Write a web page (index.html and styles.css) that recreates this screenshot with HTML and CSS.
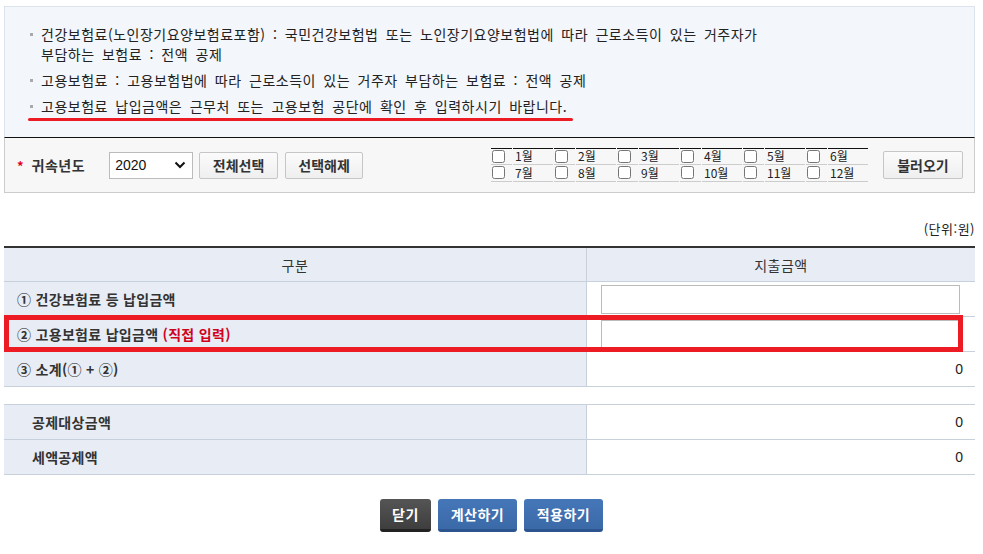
FILE: index.html
```html
<!DOCTYPE html>
<html lang="ko">
<head>
<meta charset="utf-8">
<title>건강보험료 등</title>
<link rel="stylesheet" href="styles.css">
</head>
<body>
<div class="page">
  <div class="info">
    <ul class="info-list">
      <li>건강보험료(노인장기요양보험료포함) : 국민건강보험법 또는 노인장기요양보험법에 따라 근로소득이 있는 거주자가<br>부담하는 보험료 : 전액 공제</li>
      <li>고용보험료 : 고용보험법에 따라 근로소득이 있는 거주자 부담하는 보험료 : 전액 공제</li>
      <li><span class="marked">고용보험료 납입금액은 근무처 또는 고용보험 공단에 확인 후 입력하시기 바랍니다.</span></li>
    </ul>
  </div>

  <div class="filter">
    <div class="filter-left">
      <span class="req">*</span>
      <span class="filter-label">귀속년도</span>
      <div class="select"><span>2020</span>
        <svg width="12" height="8" viewBox="0 0 12 8"><path d="M1.5 1.5 L6 6 L10.5 1.5" fill="none" stroke="#111" stroke-width="2"/></svg>
      </div>
      <button class="btn-gray w79">전체선택</button>
      <button class="btn-gray w78">선택해제</button>
    </div>
    <div class="filter-right">
      <div class="months">
        <div class="cb"><input type="checkbox"></div><div class="ml">1월</div>
        <div class="cb"><input type="checkbox"></div><div class="ml">2월</div>
        <div class="cb"><input type="checkbox"></div><div class="ml">3월</div>
        <div class="cb"><input type="checkbox"></div><div class="ml">4월</div>
        <div class="cb"><input type="checkbox"></div><div class="ml">5월</div>
        <div class="cb"><input type="checkbox"></div><div class="ml">6월</div>
        <div class="cb r2"><input type="checkbox"></div><div class="ml r2">7월</div>
        <div class="cb r2"><input type="checkbox"></div><div class="ml r2">8월</div>
        <div class="cb r2"><input type="checkbox"></div><div class="ml r2">9월</div>
        <div class="cb r2"><input type="checkbox"></div><div class="ml r2">10월</div>
        <div class="cb r2"><input type="checkbox"></div><div class="ml r2">11월</div>
        <div class="cb r2"><input type="checkbox"></div><div class="ml r2">12월</div>
      </div>
      <button class="btn-gray btn-load">불러오기</button>
    </div>
  </div>

  <div class="unit">(단위:원)</div>

  <div class="grid main">
    <div class="row head">
      <div class="c-left">구분</div>
      <div class="c-right">지출금액</div>
    </div>
    <div class="row">
      <div class="c-left label"><span>① 건강보험료 등 납입금액</span></div>
      <div class="c-right"><input class="amount" type="text"></div>
    </div>
    <div class="row highlighted">
      <div class="c-left label"><span>② 고용보험료 납입금액 <em>(직접 입력)</em></span></div>
      <div class="c-right"><input class="amount" type="text"></div>
    </div>
    <div class="row">
      <div class="c-left label"><span>③ 소계(① + ②)</span></div>
      <div class="c-right num">0</div>
    </div>
  </div>

  <div class="grid sub">
    <div class="row">
      <div class="c-left label indent">공제대상금액</div>
      <div class="c-right num">0</div>
    </div>
    <div class="row">
      <div class="c-left label indent">세액공제액</div>
      <div class="c-right num">0</div>
    </div>
  </div>

  <div class="actions">
    <button class="btn-dark">닫기</button>
    <button class="btn-blue">계산하기</button>
    <button class="btn-blue">적용하기</button>
  </div>
</div>
</body>
</html>
```

FILE: styles.css
```css
* { box-sizing: border-box; }
html, body { margin: 0; padding: 0; background: #fff; }
body {
  font-family: "Noto Sans CJK KR", "Noto Sans", sans-serif;
  color: #333;
  font-size: 14px;
}
.page { padding: 6px 8px 0 4px; width: 983px; }

/* info box */
.info {
  background: #f3f6fb;
  border: 1px solid #dde3ec;
  border-bottom: none;
  height: 131px;
  padding: 17px 0 0 20px;
}
.info-list { list-style: none; margin: 0; padding: 0; }
.info-list li {
  position: relative;
  padding-left: 16px;
  line-height: 20px;
  margin-bottom: 6px;
  font-size: 14px;
  letter-spacing: 0.5px;
  word-spacing: 3px;
  color: #222;
}
.info-list li::before {
  content: "";
  position: absolute;
  left: 5px; top: 9px;
  width: 3px; height: 3px;
  background: #aaa;
}
.marked { position: relative; display: inline-block; }
.marked::after {
  content: "";
  position: absolute;
  left: -13px; right: -6px;
  bottom: -5px;
  height: 3px;
  border-radius: 2px;
  background: #ed1c24;
}

/* filter bar */
.filter {
  border-top: 1px solid #111;
  border-left: 1px solid #ccc;
  border-right: 1px solid #ccc;
  border-bottom: 1px solid #ccc;
  background: #f7f7f7;
  height: 56px;
  display: flex;
  align-items: center;
  justify-content: space-between;
  padding: 0 11px 0 12px;
}
.filter-left { display: flex; align-items: center; }
.req { color: #e2001a; font-weight: bold; font-size: 13px; margin-right: 8px; }
.filter-label { font-weight: bold; font-size: 14px; color: #333; margin-right: 24px; letter-spacing: 0.5px; }
.select {
  width: 84px; height: 27px;
  border: 1px solid #bbb;
  background: #fff;
  display: flex; align-items: center; justify-content: space-between;
  padding: 0 6px 0 5px;
  font-family: "Liberation Sans", Arial, sans-serif;
  font-size: 14px; color: #111;
  margin-right: 6px;
}
.btn-gray {
  height: 27px;
  border: 1px solid #c6c6c6;
  border-radius: 2px;
  background: linear-gradient(#fbfbfb, #efefef);
  font-family: "Noto Sans CJK KR", sans-serif;
  font-weight: bold;
  font-size: 14px;
  color: #333;
  padding: 0;
  margin-right: 7px;
  line-height: 1;
}
.w79 { width: 79px; }
.w78 { width: 78px; }
.filter-right { display: flex; align-items: center; }
.months {
  display: grid;
  grid-template-columns: repeat(6, 21px 40px);
  column-gap: 1px;
  margin-top: -1px;
}
.months > div {
  border-top: 1px solid #111;
  border-bottom: 1px solid #ccc;
  height: 17px;
  display: flex; align-items: center;
}
.months > div.r2 { border-top: none; height: 17px; }
.cb input {
  margin: 0 0 0 1px;
  width: 13px; height: 13px;
}
.ml { font-size: 12px; color: #222; padding-left: 2px; line-height: 14px; font-family: "Noto Sans CJK KR", sans-serif; }
.btn-load { margin: 0 0 0 15px; width: 80px; height: 28px; font-size: 14px; }

.unit {
  text-align: right;
  font-size: 13px;
  color: #222;
  margin-top: 26px;
  height: 20px;
  line-height: 20px;
  letter-spacing: 0.5px;
  margin-bottom: 7px;
}

/* grids */
.grid { border-top: 2px solid #333; }
.grid.sub { border-top: 1px solid #c8d0dc; margin-top: 17px; }
.row {
  display: grid;
  grid-template-columns: 582px 1fr;
  height: 35px;
  border-bottom: 1px solid #c8d0dc;
  position: relative;
}
.row.head { height: 34px; }
.c-left {
  background: #e8edf5;
  display: flex; align-items: center;
  font-size: 14px;
}
.c-right {
  border-left: 1px solid #c8d0dc;
  display: flex; align-items: center;
  padding-left: 14px;
}
.head .c-left, .head .c-right {
  justify-content: center;
  background: #e8edf5;
  font-size: 14px;
  color: #333;
  padding-left: 0;
  letter-spacing: 0.5px;
}
.label { font-weight: bold; padding-left: 13px; color: #333; letter-spacing: 0.3px; }
.label.indent { padding-left: 28px; }
.label em { font-style: normal; color: #d0021b; }
.num {
  justify-content: flex-end;
  padding-right: 12px;
  font-family: "Liberation Sans", Arial, sans-serif;
  font-size: 14px; color: #222;
}
.amount {
  width: 359px; height: 29px;
  border: 1px solid #bbb;
  background: #fff;
  margin-top: 0;
}
.highlighted::after {
  content: "";
  position: absolute;
  left: 0; right: 12px;
  top: -2px; bottom: -1px;
  border: 5px solid #ed1c24;
  pointer-events: none;
}

/* actions */
.actions {
  display: flex; justify-content: center;
  gap: 7px;
  margin-top: 24px;
  padding-left: 4px;
}
.actions button {
  height: 33px;
  border: none;
  border-radius: 3px;
  color: #fff;
  font-family: "Noto Sans CJK KR", sans-serif;
  font-weight: bold;
  font-size: 14px;
  padding: 0;
  letter-spacing: 0.5px;
}
.btn-dark {
  background: linear-gradient(#555, #3e3e3e);
  border-bottom: 3px solid #222 !important;
  width: 51px;
}
.btn-blue {
  background: linear-gradient(#4577b8, #3b69a8);
  border-bottom: 3px solid #2c5590 !important;
  width: 79px;
}
```
